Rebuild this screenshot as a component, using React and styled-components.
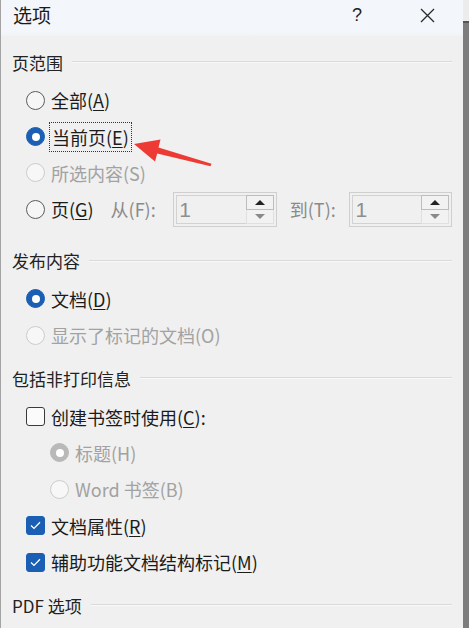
import React from 'react';
import styled, { createGlobalStyle } from 'styled-components';

const GlobalStyle = createGlobalStyle`
    html, body {
        margin: 0;
        padding: 0;
        background: #7d7d7d;
    }
    #root {
        height: 628px;
    }
`;

const BLUE = '#1a5fb4';
const FONT = `"Noto Sans CJK SC", "Noto Sans", "Liberation Sans", sans-serif`;

const Screen = styled.div`
    display: flex;
    width: 469px;
    height: 628px;
    overflow: hidden;
    font-family: ${FONT};
`;

const Dialog = styled.div`
    position: relative;
    width: 462px;
    height: 628px;
    background: #f0f0f0;
    border-left: 1px solid #a3a3a3;
    color: #1b1b1b;
`;

const Backdrop = styled.div`
    flex: 1;
    background: linear-gradient(#ececec 0 21px, #555 21px 23px, #7d7d7d 23px);
`;

const TitleBar = styled.div`
    display: flex;
    align-items: flex-start;
    height: 36px;
    padding: 4px 13px 0 12px;
    box-sizing: border-box;
    background: linear-gradient(#f3f6fa 0 32px, #f0f0f0 38px);
`;

const Title = styled.div`
    flex: 1;
    font-size: 19px;
    line-height: 22px;
`;

const TitleButton = styled.div`
    width: 46px;
    height: 22px;
    margin-right: ${p => p.$gap || 0}px;
    display: flex;
    align-items: center;
    justify-content: center;
    font-family: "Liberation Sans", sans-serif;
    font-size: 18px;
    color: #222;
`;

const Body = styled.div`
    padding: 14px 11px 0 11px;
`;

const SectionHeader = styled.div`
    display: flex;
    align-items: center;
    height: 24px;
    margin-top: ${p => (p.$first ? 0 : 13)}px;
    font-size: 17px;
    color: #222;
`;

const HeaderRule = styled.div`
    flex: 1;
    margin-left: 9px;
    border-top: 1px solid #dadada;
    border-bottom: 1px solid #f8f8f8;
`;

const Rows = styled.div`
    display: flex;
    flex-direction: column;
    margin-top: 8px;
    padding-left: 14px;
`;

const Row = styled.div`
    display: flex;
    align-items: center;
    flex: none;
    height: 36.4px;
    padding-left: ${p => (p.$indent ? 24 : 0)}px;
    margin-bottom: ${p => p.$after || 0}px;
`;

const Option = styled.div`
    display: flex;
    align-items: center;
    gap: 6px;
    width: ${p => (p.$width ? `${p.$width}px` : 'auto')};
    font-size: 18px;
    line-height: 24px;
    color: ${p => (p.$disabled ? '#a2a2a2' : '#1b1b1b')};
`;

const Radio = styled.span`
    position: relative;
    width: 19px;
    height: 19px;
    box-sizing: border-box;
    border-radius: 50%;
    flex: none;
    border: 1px solid ${p => (p.$checked ? (p.$disabled ? '#b9b9b9' : BLUE) : p.$disabled ? '#cccccc' : '#5c5c5c')};
    background: ${p => (p.$checked ? (p.$disabled ? '#b9b9b9' : BLUE) : p.$disabled ? '#f7f7f7' : '#f6f6f6')};

    &::after {
        content: '';
        display: ${p => (p.$checked ? 'block' : 'none')};
        position: absolute;
        left: 50%;
        top: 50%;
        width: 8px;
        height: 8px;
        margin: -4px 0 0 -4px;
        border-radius: 50%;
        background: #fff;
    }
`;

const Box = styled.span`
    display: flex;
    align-items: center;
    justify-content: center;
    width: 19px;
    height: 19px;
    box-sizing: border-box;
    border-radius: 3px;
    flex: none;
    border: 1px solid ${p => (p.$checked ? BLUE : '#3a3a3a')};
    background: ${p => (p.$checked ? BLUE : '#fbfbfb')};
`;

const Key = styled.span`
    text-decoration: underline;
    text-underline-offset: 2px;
    text-decoration-thickness: 1px;
`;

const Focus = styled.span`
    outline: 1px dotted #333;
    outline-offset: 1px;
    padding: 0 1px;
`;

const SpinLabel = styled.span`
    width: ${p => p.$width}px;
    margin-left: ${p => p.$offset || 0}px;
    font-size: 18px;
    line-height: 24px;
    color: #8a8a8a;
`;

const Spin = styled.div`
    display: flex;
    width: ${p => p.$width}px;
    height: 35px;
    box-sizing: border-box;
    border: 1px solid #cfcfcf;
    background: #f0f0f0;
    padding: 2px;
`;

const SpinField = styled.div`
    flex: 1;
    border: 1px solid #d2d2d2;
    border-right: none;
    padding-left: 2px;
    font-family: "Liberation Sans", sans-serif;
    font-size: 21px;
    line-height: 27px;
    color: #8e8e8e;
`;

const SpinButtons = styled.div`
    display: flex;
    flex-direction: column;
    width: 28px;
`;

const SpinButton = styled.div`
    flex: 1;
    display: flex;
    align-items: center;
    justify-content: center;
    border: 1px solid ${p => (p.$up ? '#bdbdbd' : '#e0e0e0')};
    border-top: ${p => (p.$up ? '1px solid #bdbdbd' : 'none')};
    background: #f2f2f2;
`;

const Arrow = styled.span`
    width: 0;
    height: 0;
    border-left: 5px solid transparent;
    border-right: 5px solid transparent;
    ${p => (p.$up ? 'border-bottom: 5px solid #222;' : 'border-top: 5px solid #8a8a8a;')}
`;

const Pointer = styled.svg`
    position: absolute;
    left: 0;
    top: 0;
    width: 462px;
    height: 628px;
    pointer-events: none;
`;

const CloseIcon = () => (
    <svg width="15" height="15" viewBox="0 0 15 15">
        <path d="M1 1 L14 14 M14 1 L1 14" stroke="#2a2a2a" strokeWidth="1.3" fill="none" />
    </svg>
);

const Check = () => (
    <svg width="11" height="9" viewBox="0 0 11 9">
        <path d="M1 4.6 L4 7.4 L10 1.2" stroke="#fff" strokeWidth="1.3" fill="none" />
    </svg>
);

const RadioOption = ({ checked, disabled, width, children }) => (
    <Option $disabled={disabled} $width={width}>
        <Radio $checked={checked} $disabled={disabled} />
        <span>{children}</span>
    </Option>
);

const CheckOption = ({ checked, children }) => (
    <Option>
        <Box $checked={checked}>{checked && <Check />}</Box>
        <span>{children}</span>
    </Option>
);

const SpinBox = ({ width, value }) => (
    <Spin $width={width}>
        <SpinField>{value}</SpinField>
        <SpinButtons>
            <SpinButton $up><Arrow $up /></SpinButton>
            <SpinButton><Arrow /></SpinButton>
        </SpinButtons>
    </Spin>
);

const Section = ({ title, first, children }) => (
    <>
        <SectionHeader $first={first}>
            {title}
            <HeaderRule />
        </SectionHeader>
        <Rows>{children}</Rows>
    </>
);

const App = () => {
    return (
        <Screen>
            <GlobalStyle />
            <Dialog>
                <TitleBar>
                    <Title>选项</Title>
                    <TitleButton $gap={24}>?</TitleButton>
                    <TitleButton><CloseIcon /></TitleButton>
                </TitleBar>
                <Body>
                    <Section title="页范围" first>
                        <Row>
                            <RadioOption>全部(<Key>A</Key>)</RadioOption>
                        </Row>
                        <Row>
                            <RadioOption checked><Focus>当前页(<Key>E</Key>)</Focus></RadioOption>
                        </Row>
                        <Row>
                            <RadioOption disabled>所选内容(S)</RadioOption>
                        </Row>
                        <Row $after={8}>
                            <RadioOption width={85}>页(<Key>G</Key>)</RadioOption>
                            <SpinLabel $width={63}>从(F):</SpinLabel>
                            <SpinBox width={104} value="1" />
                            <SpinLabel $width={60} $offset={13}>到(T):</SpinLabel>
                            <SpinBox width={103} value="1" />
                        </Row>
                    </Section>
                    <Section title="发布内容">
                        <Row>
                            <RadioOption checked>文档(<Key>D</Key>)</RadioOption>
                        </Row>
                        <Row>
                            <RadioOption disabled>显示了标记的文档(O)</RadioOption>
                        </Row>
                    </Section>
                    <Section title="包括非打印信息">
                        <Row>
                            <CheckOption>创建书签时使用(<Key>C</Key>):</CheckOption>
                        </Row>
                        <Row $indent>
                            <RadioOption checked disabled>标题(H)</RadioOption>
                        </Row>
                        <Row $indent>
                            <RadioOption disabled>Word 书签(B)</RadioOption>
                        </Row>
                        <Row>
                            <CheckOption checked>文档属性(<Key>R</Key>)</CheckOption>
                        </Row>
                        <Row>
                            <CheckOption checked>辅助功能文档结构标记(<Key>M</Key>)</CheckOption>
                        </Row>
                    </Section>
                    <Section title="PDF 选项" />
                </Body>
                <Pointer viewBox="0 0 462 628">
                    <polygon
                        points="133,144 159.5,139.5 157.5,147.5 210.5,163.8 209.5,166.2 156.2,153.6 154,161.5"
                        fill="#ee3a34"
                    />
                </Pointer>
            </Dialog>
            <Backdrop />
        </Screen>
    );
};

export default App;
